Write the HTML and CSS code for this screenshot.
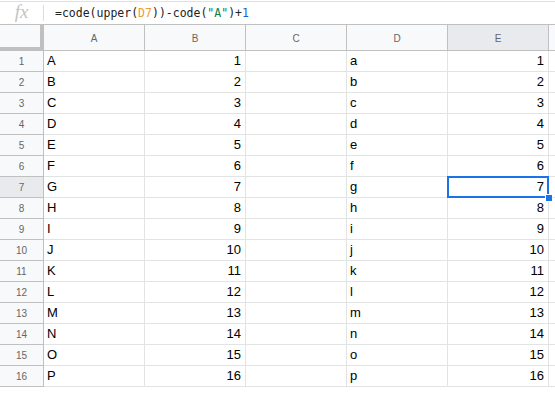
FILE: index.html
```html
<!DOCTYPE html>
<html lang="en">
<head>
  <meta charset="UTF-8">
  <title>Sheet</title>
  <link rel="stylesheet" href="styles.css">
</head>
<body>

  <div class="formula-bar">
    <div class="fx">fx</div>
    <div class="formula">=code(upper(<span class="ref">D7</span>))-code(<span class="str">"A"</span>)+<span class="num">1</span></div>
  </div>

  <div class="sheet" id="sheet">
    <div class="corner"></div>
    <div class="col-head">A</div>
    <div class="col-head">B</div>
    <div class="col-head">C</div>
    <div class="col-head">D</div>
    <div class="col-head active">E</div>
    <div class="col-head rest"></div>
  </div>

  <script>
    // build the 16 data rows
    const sheet = document.getElementById("sheet");
    const upper = "ABCDEFGHIJKLMNOP";
    for (let i = 0; i < 16; i++) {
      const n = i + 1;
      const cells = [
        ["row-head" + (n === 7 ? " active" : ""), n],
        ["cell", upper[i]],
        ["cell num", n],
        ["cell", ""],
        ["cell", upper[i].toLowerCase()],
        ["cell num" + (n === 7 ? " selected" : ""), n],
        ["cell rest", ""],
      ];
      cells.forEach(c => {
        const d = document.createElement("div");
        d.className = c[0];
        d.textContent = c[1];
        if (c[0].includes("selected")) {
          const h = document.createElement("span");
          h.className = "handle";
          d.appendChild(h);
        }
        sheet.appendChild(d);
      });
    }
  </script>

</body>
</html>
```

FILE: styles.css
```css
body {
  margin: 0;
  background: #fff;
  font-family: "Liberation Sans", Arial, sans-serif;
  overflow: hidden;
}

.formula-bar {
  display: flex;
  align-items: center;
  height: 22px;
  margin-top: 1px;
  border-top: 1px solid #e0e0e0;
}

.fx {
  width: 43px;
  text-align: center;
  font-family: "Liberation Serif", serif;
  font-style: italic;
  font-size: 19px;
  color: #c4c4c4;
  border-right: 1px solid #dadce0;
  line-height: 14px;
  height: 14px;
  padding-bottom: 2px;
}

.formula {
  margin-left: 11px;
  font-family: "DejaVu Sans Mono", monospace;
  font-size: 11.5px;
  color: #222;
}

.formula .ref { color: #f19a38; }
.formula .str { color: #0b8043; }
.formula .num { color: #1a5fd0; }

.sheet {
  display: grid;
  grid-template-columns: 44px repeat(5, 101px) 1fr;
  grid-template-rows: 27px;
  grid-auto-rows: 21px;
}

.corner {
  background: #f8f9fa;
  border-top: 1px solid #c0c0c0;
  border-right: 4px solid #c0c0c0;
  border-bottom: 4px solid #c0c0c0;
  box-sizing: border-box;
}

.col-head {
  box-sizing: border-box;
  background: #f8f9fa;
  border-top: 1px solid #c0c0c0;
  border-right: 1px solid #c0c0c0;
  border-bottom: 1px solid #c0c0c0;
  color: #666;
  font-size: 10px;
  display: flex;
  align-items: center;
  justify-content: center;
  padding-top: 1px;
}

.col-head.active {
  background: #e8eaed;
}

.col-head.rest {
  border-right: none;
}

.row-head {
  box-sizing: border-box;
  background: #f8f9fa;
  border-right: 1px solid #c0c0c0;
  border-bottom: 1px solid #c0c0c0;
  color: #666;
  font-size: 10px;
  display: flex;
  align-items: center;
  justify-content: center;
}

.row-head.active {
  background: #e8eaed;
}

.cell {
  position: relative;
  box-sizing: border-box;
  border-right: 1px solid #e2e3e3;
  border-bottom: 1px solid #e2e3e3;
  font-size: 13px;
  color: #000;
  padding: 0 3px;
  line-height: 20px;
}

.cell.num {
  text-align: right;
  padding-right: 4px;
}

.cell.rest {
  border-right: none;
}

.cell.selected::after {
  content: "";
  position: absolute;
  left: -1px;
  top: -1px;
  right: -1px;
  bottom: -1px;
  border: 2px solid #1a73e8;
}

.handle {
  position: absolute;
  right: -5px;
  bottom: -5px;
  width: 6px;
  height: 6px;
  background: #1a73e8;
  border: 1px solid #fff;
  z-index: 2;
}
```
